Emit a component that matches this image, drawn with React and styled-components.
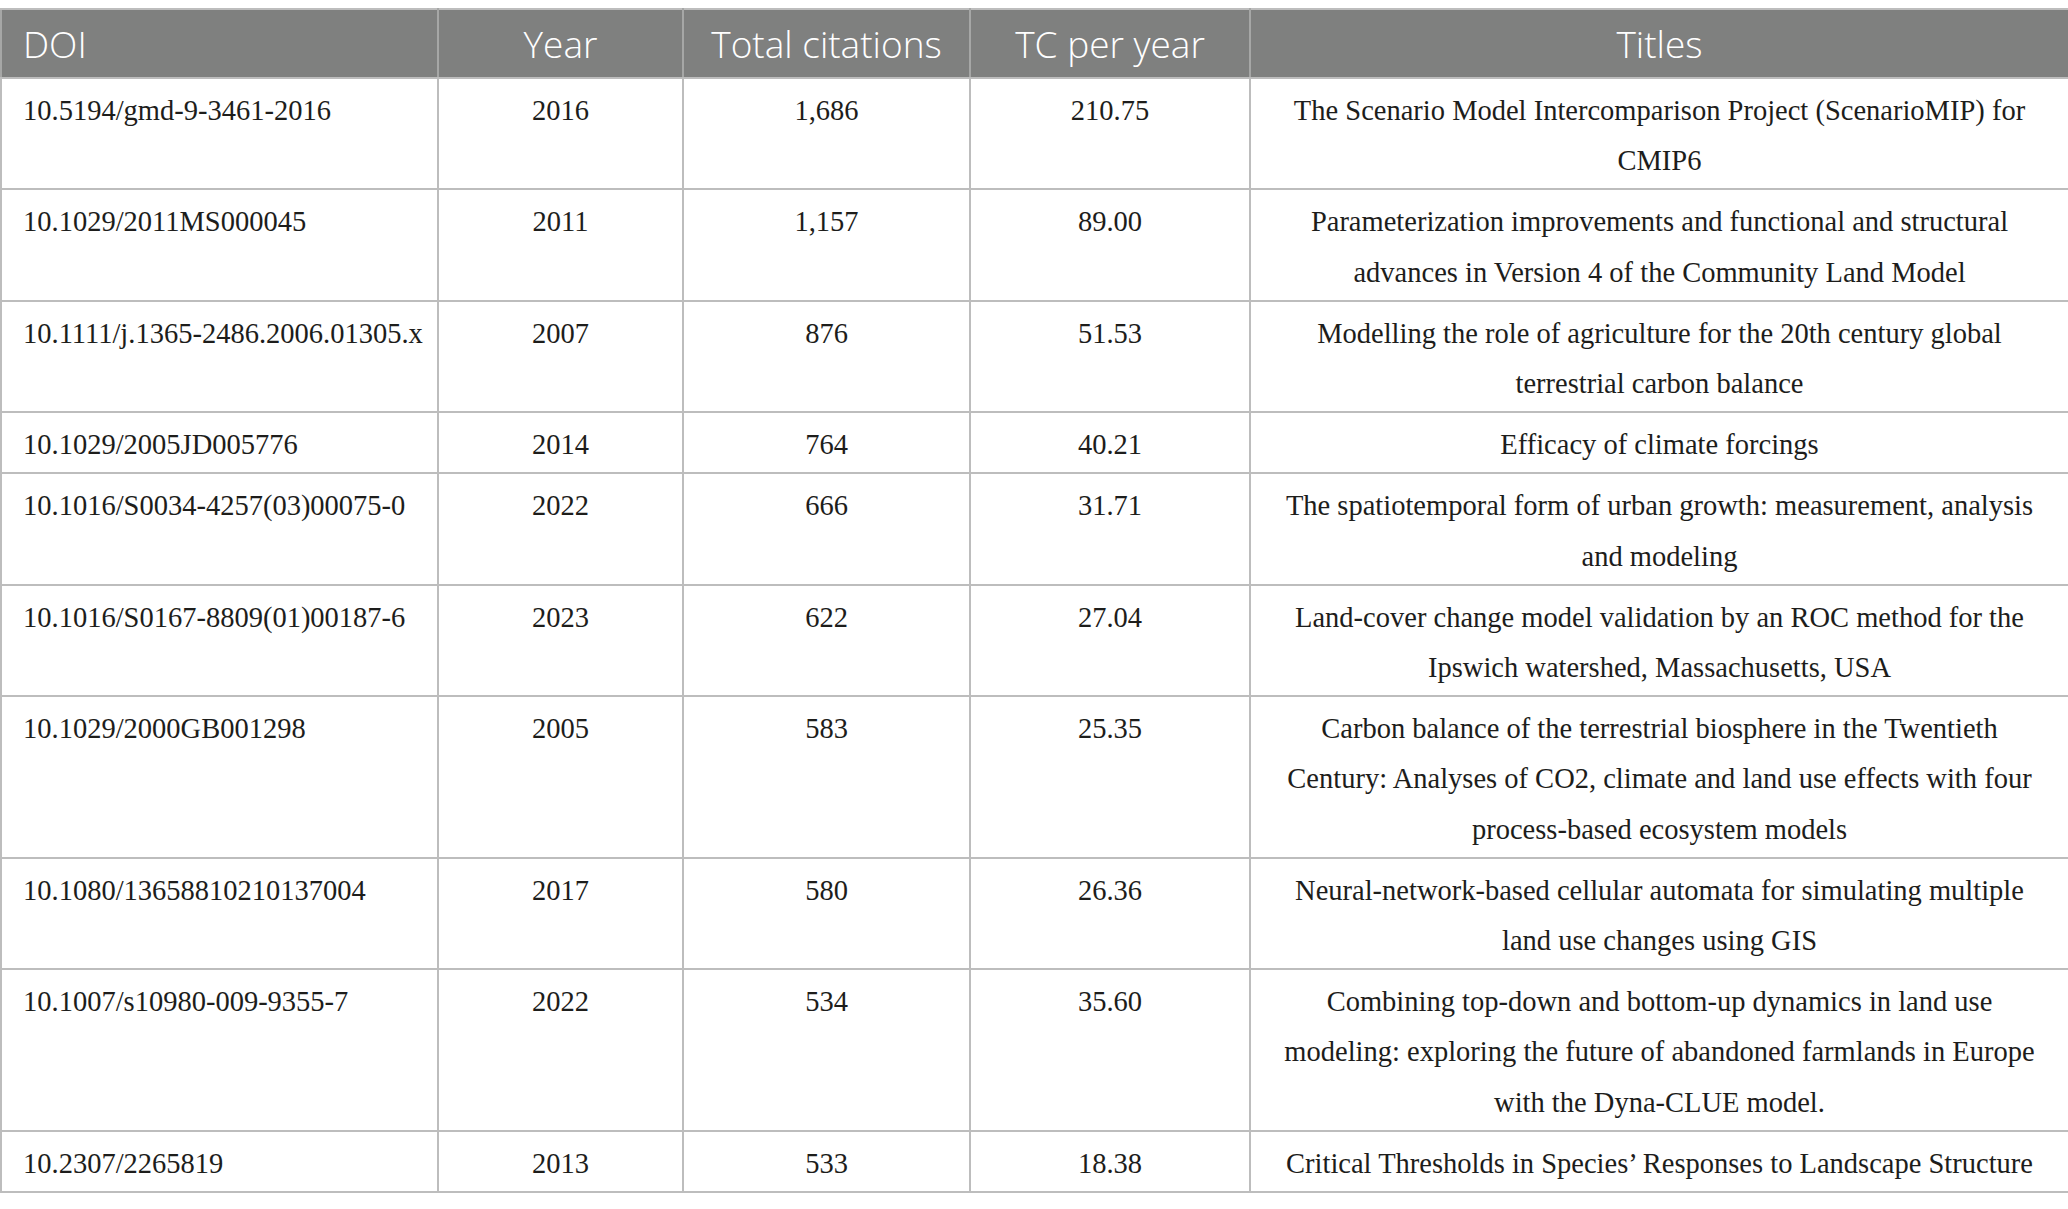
import React from 'react';
import styled, { createGlobalStyle } from 'styled-components';

const GlobalStyle = createGlobalStyle`
  html, body {
    margin: 0;
    padding: 0;
    background: #ffffff;
  }
  body {
    padding-top: 8px;
  }
`;

const Table = styled.table`
  width: 2068px;
  border-collapse: collapse;
  table-layout: fixed;
  font-family: 'Liberation Serif', 'Times New Roman', serif;
  color: #1d1d1b;
  border: 2px solid #bdbdbd;
`;

const HeadCell = styled.th`
  height: 67px;
  padding: 0 21px;
  background-color: #7f807f;
  color: #ffffff;
  font-family: 'Open Sans', 'Noto Sans', sans-serif;
  font-weight: 300;
  font-size: 37px;
  text-align: ${(p) => p.$align || 'center'};
  border: 2px solid #a6a7a6;
  border-top-color: #bdbdbd;
  border-bottom-color: #bdbdbd;
  white-space: nowrap;
`;

const Cell = styled.td`
  padding: 7px 21px 2px 21px;
  font-size: 28.5px;
  line-height: 50.2px;
  vertical-align: top;
  text-align: ${(p) => p.$align || 'center'};
  border: 2px solid #bdbdbd;
  white-space: nowrap;
`;

const TitleLine = styled.div`
  white-space: nowrap;
`;

const columns = [
  { label: 'DOI', width: 437, align: 'left' },
  { label: 'Year', width: 245 },
  { label: 'Total citations', width: 287 },
  { label: 'TC per year', width: 280 },
  { label: 'Titles', width: 819 },
];

const rows = [
  ['10.5194/gmd-9-3461-2016', '2016', '1,686', '210.75', ['The Scenario Model Intercomparison Project (ScenarioMIP) for', 'CMIP6']],
  ['10.1029/2011MS000045', '2011', '1,157', '89.00', ['Parameterization improvements and functional and structural', 'advances in Version 4 of the Community Land Model']],
  ['10.1111/j.1365-2486.2006.01305.x', '2007', '876', '51.53', ['Modelling the role of agriculture for the 20th century global', 'terrestrial carbon balance']],
  ['10.1029/2005JD005776', '2014', '764', '40.21', ['Efficacy of climate forcings']],
  ['10.1016/S0034-4257(03)00075-0', '2022', '666', '31.71', ['The spatiotemporal form of urban growth: measurement, analysis', 'and modeling']],
  ['10.1016/S0167-8809(01)00187-6', '2023', '622', '27.04', ['Land-cover change model validation by an ROC method for the', 'Ipswich watershed, Massachusetts, USA']],
  ['10.1029/2000GB001298', '2005', '583', '25.35', ['Carbon balance of the terrestrial biosphere in the Twentieth', 'Century: Analyses of CO2, climate and land use effects with four', 'process-based ecosystem models']],
  ['10.1080/13658810210137004', '2017', '580', '26.36', ['Neural-network-based cellular automata for simulating multiple', 'land use changes using GIS']],
  ['10.1007/s10980-009-9355-7', '2022', '534', '35.60', ['Combining top-down and bottom-up dynamics in land use', 'modeling: exploring the future of abandoned farmlands in Europe', 'with the Dyna-CLUE model.']],
  ['10.2307/2265819', '2013', '533', '18.38', ['Critical Thresholds in Species\u2019 Responses to Landscape Structure']],
];

const App = () => (
  <>
    <GlobalStyle />
    <Table>
      <colgroup>
        {columns.map((c) => (
          <col key={c.label} style={{ width: c.width }} />
        ))}
      </colgroup>
      <thead>
        <tr>
          {columns.map((c) => (
            <HeadCell key={c.label} $align={c.align}>{c.label}</HeadCell>
          ))}
        </tr>
      </thead>
      <tbody>
        {rows.map(([doi, year, total, perYear, title]) => (
          <tr key={doi}>
            <Cell $align="left">{doi}</Cell>
            <Cell>{year}</Cell>
            <Cell>{total}</Cell>
            <Cell>{perYear}</Cell>
            <Cell>
              {title.map((line) => (
                <TitleLine key={line}>{line}</TitleLine>
              ))}
            </Cell>
          </tr>
        ))}
      </tbody>
    </Table>
  </>
);

export default App;
